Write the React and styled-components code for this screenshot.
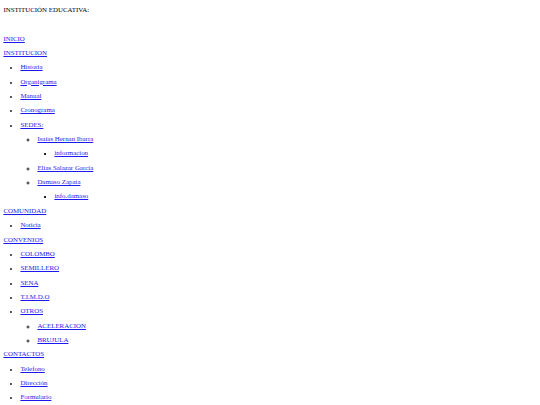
import React from "react";
import styled, { createGlobalStyle } from "styled-components";

const Global = createGlobalStyle`
  html, body { margin: 0; padding: 0; background: #fff; }
  body {
    padding: 3px 3.4px;
    font-family: "Liberation Serif", "Times New Roman", serif;
    font-size: 6.9px;
    line-height: 14.35px;
    color: #000;
  }
`;

const Title = styled.div`
  height: 14.35px;
`;

const Spacer = styled.div`
  height: 14.35px;
`;

const Nav = styled.nav`
  display: block;
`;

const TopRow = styled.div`
  height: 14.35px;
`;

const Link = styled.a`
  color: #1a1aee;
  text-decoration: underline;
`;

const List = styled.ul`
  margin: 0;
  padding-left: 17px;
  list-style-type: ${(p) => p.$type};
`;

const Item = styled.li`
  line-height: 14.35px;
  &::marker {
    font-size: 5.5px;
    color: #222;
  }
`;

const menu = [
  { label: "INICIO" },
  {
    label: "INSTITUCION",
    children: [
      { label: "Historia" },
      { label: "Organigrama" },
      { label: "Manual" },
      { label: "Cronograma" },
      {
        label: "SEDES:",
        children: [
          { label: "Isaías Hernan Ibarra", children: [{ label: "informacion" }] },
          { label: "Elias Salazar García" },
          { label: "Damaso Zapata", children: [{ label: "info.damaso" }] },
        ],
      },
    ],
  },
  { label: "COMUNIDAD", children: [{ label: "Noticia" }] },
  {
    label: "CONVENIOS",
    children: [
      { label: "COLOMBO" },
      { label: "SEMILLERO" },
      { label: "SENA" },
      { label: "T.I.M.D.O" },
      { label: "OTROS", children: [{ label: "ACELERACION" }, { label: "BRUJULA" }] },
    ],
  },
  {
    label: "CONTACTOS",
    children: [{ label: "Telefono" }, { label: "Dirección" }, { label: "Formulario" }],
  },
];

const types = ["disc", "circle", "square"];

function SubMenu({ items, level }) {
  return (
    <List $type={types[level] || "square"}>
      {items.map((it) => (
        <Item key={it.label}>
          <Link href="#">{it.label}</Link>
          {it.children && <SubMenu items={it.children} level={level + 1} />}
        </Item>
      ))}
    </List>
  );
}

export default function App() {
  return (
    <>
      <Global />
      <Title>INSTITUCIÓN EDUCATIVA:</Title>
      <Spacer />
      <Nav>
        {menu.map((m) => (
          <React.Fragment key={m.label}>
            <TopRow>
              <Link href="#">{m.label}</Link>
            </TopRow>
            {m.children && <SubMenu items={m.children} level={0} />}
          </React.Fragment>
        ))}
      </Nav>
    </>
  );
}
